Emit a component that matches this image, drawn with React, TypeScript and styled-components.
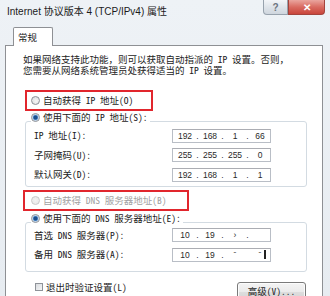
import React from 'react';
import styled, { createGlobalStyle } from 'styled-components';

const CJK = `"Noto Sans Mono CJK SC", "Liberation Mono", "Noto Sans CJK SC", monospace`;

const Global = createGlobalStyle`
  html, body { margin: 0; padding: 0; background: #eef1f4; }
  body { width: 330px; height: 296px; overflow: hidden; }
  * { box-sizing: border-box; }
`;

const Window = styled.div`
  width: 330px;
  height: 296px;
  overflow: hidden;
  display: flex;
  flex-direction: column;
  background: linear-gradient(#eef2f6, #e7ecf1);
  font-family: ${CJK};
  color: #1c1c1c;
`;

const TitleBar = styled.div`
  height: 22px;
  flex-shrink: 0;
  display: flex;
  align-items: flex-start;
  justify-content: space-between;
`;

const Title = styled.div`
  font-family: "Liberation Sans", "Noto Sans CJK SC", sans-serif;
  font-size: 10px;
  line-height: 12px;
  padding: 6px 0 0 7px;
  color: #1b1b1b;
`;

const Captions = styled.div`
  display: flex;
  margin-right: 5px;
`;

const CapButton = styled.div<{ $close?: boolean }>`
  width: ${p => (p.$close ? 37 : 25)}px;
  height: 15px;
  display: flex;
  align-items: center;
  justify-content: center;
  border: 1px solid ${p => (p.$close ? '#a3433c' : '#98a2ad')};
  border-top: none;
  border-radius: ${p => (p.$close ? '0 0 4px 0' : '0 0 0 4px')};
  background: ${p =>
    p.$close
      ? 'linear-gradient(#eaa59e, #d96b61 50%, #c9453b)'
      : 'linear-gradient(#f3f5f8, #dfe4ea 50%, #cfd6de)'};
  color: ${p => (p.$close ? '#ffffff' : '#6d7480')};
  font-family: "Liberation Sans", sans-serif;
  font-size: 10px;
  font-weight: bold;
`;

const Body = styled.div`
  flex: 1;
  display: flex;
  flex-direction: column;
  padding: 5px 7px 0 5px;
`;

const TabRow = styled.div`
  height: 18px;
  display: flex;
  align-items: flex-end;
  padding-left: 8px;
`;

const Tab = styled.div`
  width: 40px;
  height: 19px;
  margin-bottom: -1px;
  position: relative;
  z-index: 1;
  border: 1px solid #8e9094;
  border-bottom: none;
  border-radius: 2px 2px 0 0;
  background: #ffffff;
  font-size: 9.5px;
  line-height: 18px;
  padding-left: 4px;
`;

const Panel = styled.div`
  flex: 1;
  display: flex;
  flex-direction: column;
  border: 1px solid #8e9094;
  border-bottom: none;
  background: #ffffff;
`;

const Intro = styled.div`
  margin: 7.5px 0 0 17px;
  font-size: 9.5px;
  line-height: 11px;
  white-space: nowrap;
`;

const Line = styled.div``;

const RedBox = styled.div<{ $left: number; $width: number; $top: number; $pad: number }>`
  margin: ${p => p.$top}px 0 0 ${p => p.$left}px;
  width: ${p => p.$width}px;
  height: 21px;
  border: 2px solid #e1262d;
  display: flex;
  align-items: center;
  padding-left: ${p => p.$pad}px;
`;

const Choice = styled.div<{ $disabled?: boolean }>`
  display: flex;
  align-items: center;
  gap: 3px;
  font-size: 9.5px;
  line-height: 11px;
  white-space: nowrap;
  color: ${p => (p.$disabled ? '#a2a2a2' : '#1c1c1c')};
`;

const Radio = styled.span<{ $checked?: boolean; $disabled?: boolean }>`
  width: 9px;
  height: 9px;
  border-radius: 50%;
  flex-shrink: 0;
  border: 1px solid ${p => (p.$disabled ? '#c9c9c9' : '#8b8f96')};
  background: ${p =>
    p.$checked
      ? 'radial-gradient(circle, #1d4f8c 0 1.6px, #4d86c4 2.2px, #bcd3ea 3px, #f4f6f8 3.6px)'
      : p.$disabled
      ? 'radial-gradient(circle, #f2f2f2, #e6e6e6)'
      : 'radial-gradient(circle at 60% 60%, #f6f6f6, #d6d8db)'};
`;

const Group = styled.div<{ $top: number; $rowsTop: number; $bottom: number }>`
  margin: ${p => p.$top}px 15px 0 19px;
  border: 1px solid #d3dbe2;
  border-radius: 3px;
  padding: 0 0 ${p => p.$bottom}px 8px;
  display: flex;
  flex-direction: column;
  & > :nth-child(2) {
    margin-top: ${p => p.$rowsTop}px;
  }
`;

const Legend = styled.div`
  margin: -9.5px 0 0 -3px;
  align-self: flex-start;
  background: #ffffff;
  padding-right: 2px;
`;

const Rows = styled.div`
  display: grid;
  grid-template-columns: 138px 99px;
  row-gap: 5.5px;
  align-items: center;
`;

const Label = styled.div`
  font-size: 9.5px;
  line-height: 11px;
  white-space: nowrap;
`;

const IpBox = styled.div`
  height: 14px;
  border: 1px solid #b9bec6;
  border-top-color: #abadb3;
  background: #ffffff;
  display: flex;
  align-items: center;
  padding-left: 2px;
  font-family: "Liberation Sans", sans-serif;
  font-size: 8.5px;
  color: #2a2a2a;
`;

const Field = styled.span`
  width: 20px;
  text-align: center;
`;

const Dot = styled.span<{ $hidden?: boolean }>`
  width: 5px;
  text-align: center;
  visibility: ${p => (p.$hidden ? 'hidden' : 'visible')};
`;

const Caret = styled.span`
  width: 1.5px;
  height: 9px;
  background: #222;
  margin-left: -6px;
`;

const Footer = styled.div`
  margin: 10px 16px 0 29px;
  display: flex;
  justify-content: space-between;
  align-items: flex-start;
`;

const CheckRow = styled.div`
  display: flex;
  align-items: center;
  gap: 3px;
  font-size: 9.5px;
  line-height: 11px;
`;

const CheckBox = styled.span`
  width: 8px;
  height: 8px;
  border: 1px solid #8f9399;
  background: linear-gradient(135deg, #d9dcdf, #f5f6f7);
`;

const Button = styled.div`
  width: 69px;
  height: 20px;
  border: 1px solid #7a7a7a;
  border-radius: 3px;
  background: linear-gradient(#f4f4f4, #ebebeb 48%, #dddddd 52%, #d3d3d3);
  box-shadow: inset 0 0 0 1px #fcfcfc;
  display: flex;
  align-items: center;
  justify-content: center;
  font-size: 9.5px;
  line-height: 11px;
`;

type Ip = string[];

const IpInput: React.FC<{ ip: Ip }> = ({ ip }) => (
  <IpBox>
    <Field>{ip[0]}</Field>
    <Dot>.</Dot>
    <Field>{ip[1]}</Field>
    <Dot>.</Dot>
    <Field>{ip[2]}</Field>
    <Dot>.</Dot>
    <Field>{ip[3]}</Field>
  </IpBox>
);

export default function App() {
  return (
    <>
      <Global />
      <Window>
        <TitleBar>
          <Title>Internet 协议版本 4 (TCP/IPv4) 属性</Title>
          <Captions>
            <CapButton>?</CapButton>
            <CapButton $close>✕</CapButton>
          </Captions>
        </TitleBar>
        <Body>
          <TabRow>
            <Tab>常规</Tab>
          </TabRow>
          <Panel>
            <Intro>
              <Line>如果网络支持此功能，则可以获取自动指派的 IP 设置。否则，</Line>
              <Line>您需要从网络系统管理员处获得适当的 IP 设置。</Line>
            </Intro>

            <RedBox $left={19} $width={128} $top={14} $pad={4}>
              <Choice>
                <Radio />
                自动获得 IP 地址(O)
              </Choice>
            </RedBox>

            <Group $top={10} $rowsTop={5.5} $bottom={4}>
              <Legend>
                <Choice>
                  <Radio $checked />
                  使用下面的 IP 地址(S):
                </Choice>
              </Legend>
              <Rows>
                <Label>IP 地址(I):</Label>
                <IpInput ip={['192', '168', '1', '66']} />
                <Label>子网掩码(U):</Label>
                <IpInput ip={['255', '255', '255', '0']} />
                <Label>默认网关(D):</Label>
                <IpInput ip={['192', '168', '1', '1']} />
              </Rows>
            </Group>

            <RedBox $left={17} $width={166} $top={3} $pad={6}>
              <Choice $disabled>
                <Radio $disabled />
                自动获得 DNS 服务器地址(B)
              </Choice>
            </RedBox>

            <Group $top={11} $rowsTop={4} $bottom={9}>
              <Legend>
                <Choice>
                  <Radio $checked />
                  使用下面的 DNS 服务器地址(E):
                </Choice>
              </Legend>
              <Rows>
                <Label>首选 DNS 服务器(P):</Label>
                <IpBox>
                  <Field>10</Field>
                  <Dot>.</Dot>
                  <Field>19</Field>
                  <Dot>.</Dot>
                  <Field>›</Field>
                  <Dot>.</Dot>
                  <Field />
                </IpBox>
                <Label>备用 DNS 服务器(A):</Label>
                <IpBox>
                  <Field>10</Field>
                  <Dot>.</Dot>
                  <Field>19</Field>
                  <Dot>.</Dot>
                  <Field>ˉ</Field>
                  <Dot $hidden>.</Dot>
                  <Field>ˉ</Field>
                  <Caret />
                </IpBox>
              </Rows>
            </Group>

            <Footer>
              <CheckRow>
                <CheckBox />
                退出时验证设置(L)
              </CheckRow>
              <Button>高级(V)...</Button>
            </Footer>
          </Panel>
        </Body>
      </Window>
    </>
  );
}
